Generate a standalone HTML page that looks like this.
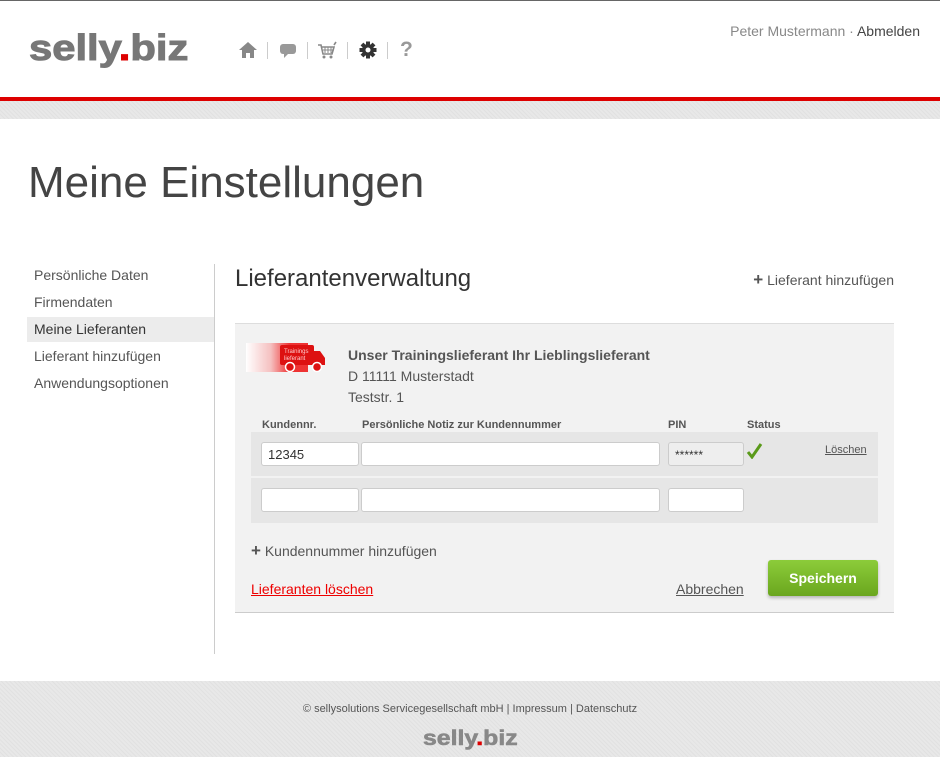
<!DOCTYPE html>
<html><head><meta charset="utf-8"><style>
*{margin:0;padding:0;box-sizing:border-box}
body{width:940px;height:757px;position:relative;background:#fff;font-family:"Liberation Sans",sans-serif;color:#555;overflow:hidden}
.a{position:absolute;white-space:nowrap}
.logo{font-weight:bold;color:#777;letter-spacing:0px}
.logo i{font-style:normal;color:#d00}
.sep{position:absolute;top:42px;width:1px;height:17px;background:#ccc}
.side{left:34px;font-size:14px;color:#555}
.inp{position:absolute;background:#fff;border:1px solid #ccc;border-radius:3px;height:24px;font-size:13px;padding:4px 6px;color:#333}
.hd{font-size:11px;font-weight:bold;color:#555;top:419px}
.tex{background:#e8e8e8;background-image:repeating-linear-gradient(45deg,rgba(0,0,0,.03) 0 1px,transparent 1px 3px)}
</style></head><body>
<div class="a" style="left:0;top:0;width:940px;height:1px;background:#666"></div>
<div class="a logo" style="left:29px;top:27px;font-size:36px;transform:scaleX(1.16);transform-origin:left;-webkit-text-stroke:1px #777">selly<i style="-webkit-text-stroke:1px #d00">.</i>biz</div>
<svg class="a" style="left:238px;top:41px" width="20" height="18" viewBox="0 0 20 18"><path d="M10 1L1 9h3v8h4v-5h4v5h4V9h3z" fill="#888"/></svg>
<div class="sep" style="left:267px"></div>
<svg class="a" style="left:279px;top:43px" width="18" height="16" viewBox="0 0 18 16"><rect x="1" y="1" width="16" height="10" rx="3" fill="#999"/><path d="M5 10l0 5 5-5z" fill="#999"/></svg>
<div class="sep" style="left:307px"></div>
<svg class="a" style="left:317px;top:41px" width="20" height="18" viewBox="0 0 20 18"><path d="M1 4h3l2 9h9l2-7H5M19 1l-2 3" stroke="#888" stroke-width="1.6" fill="none"/><path d="M8 6v6M11 6v6M14 6v6M6 9h11" stroke="#888" stroke-width="1"/><circle cx="7" cy="16" r="1.5" fill="#888"/><circle cx="14" cy="16" r="1.5" fill="#888"/></svg>
<div class="sep" style="left:347px"></div>
<svg class="a" style="left:359px;top:41px" width="18" height="18" viewBox="0 0 18 18"><g fill="#333"><circle cx="9" cy="9" r="6"/><rect x="7" y="0.5" width="4" height="17"/><rect x="0.5" y="7" width="17" height="4"/><rect x="7" y="0.5" width="4" height="17" transform="rotate(45 9 9)"/><rect x="7" y="0.5" width="4" height="17" transform="rotate(-45 9 9)"/></g><circle cx="9" cy="9" r="2.5" fill="#fff"/></svg>
<div class="sep" style="left:387px"></div>
<div class="a" style="left:400px;top:38px;font-size:21px;font-weight:bold;color:#999">?</div>
<div class="a" style="right:20px;top:23px;font-size:14px;color:#888">Peter Mustermann · <span style="color:#444">Abmelden</span></div>
<div class="a" style="left:0;top:97px;width:940px;height:4px;background:#d00"></div>
<div class="a tex" style="left:0;top:101px;width:940px;height:18px"></div>
<div class="a" style="left:28px;top:158px;font-size:44px;color:#444;font-weight:300">Meine Einstellungen</div>
<div class="a" style="left:27px;top:317px;width:187px;height:25px;background:#ececec"></div>
<div class="a side" style="top:267px">Persönliche Daten</div>
<div class="a side" style="top:294px">Firmendaten</div>
<div class="a side" style="top:321px;color:#333">Meine Lieferanten</div>
<div class="a side" style="top:348px">Lieferant hinzufügen</div>
<div class="a side" style="top:375px">Anwendungsoptionen</div>
<div class="a" style="left:214px;top:264px;width:1px;height:390px;background:#ccc"></div>
<div class="a" style="left:235px;top:265px;font-size:24px;color:#333">Lieferantenverwaltung</div>
<div class="a" style="right:46px;top:270px;font-size:14px;color:#555"><b style="font-size:17px;color:#555">+</b> Lieferant hinzufügen</div>
<div class="a" style="left:235px;top:323px;width:659px;height:290px;background:#f2f2f2;border-top:1px solid #ddd;border-bottom:1px solid #ccc"></div>
<div class="a" style="left:246px;top:343px;width:62px;height:29px;background:linear-gradient(90deg,#fff 0%,#f5c0c0 40%,#e33 70%)"></div>
<svg class="a" style="left:280px;top:343px" width="46" height="30" viewBox="0 0 46 30"><rect x="0" y="2" width="34" height="20" rx="2" fill="#d11"/><path d="M34 8h6l5 7v7h-11z" fill="#d11"/><circle cx="10" cy="24" r="4.5" fill="#d11" stroke="#fff" stroke-width="1.5"/><circle cx="37" cy="24" r="4.5" fill="#d11" stroke="#fff" stroke-width="1.5"/><text x="4" y="10" font-size="6" fill="#fcc" font-family="Liberation Sans">Trainings</text><text x="4" y="17" font-size="6" fill="#fcc" font-family="Liberation Sans">lieferant</text></svg>
<div class="a" style="left:348px;top:347px;font-size:14px;font-weight:bold;color:#555">Unser Trainingslieferant Ihr Lieblingslieferant</div>
<div class="a" style="left:348px;top:368px;font-size:14px;color:#555">D 11111 Musterstadt</div>
<div class="a" style="left:348px;top:389px;font-size:14px;color:#555">Teststr. 1</div>
<div class="a hd" style="left:262px">Kundennr.</div>
<div class="a hd" style="left:362px">Persönliche Notiz zur Kundennummer</div>
<div class="a hd" style="left:668px">PIN</div>
<div class="a hd" style="left:747px">Status</div>
<div class="a" style="left:251px;top:432px;width:627px;height:44px;background:#e6e6e6"></div>
<div class="a" style="left:251px;top:478px;width:627px;height:45px;background:#e6e6e6"></div>
<div class="inp" style="left:261px;top:442px;width:98px">12345</div>
<div class="inp" style="left:361px;top:442px;width:299px"></div>
<div class="inp" style="left:668px;top:442px;width:76px;background:#eee;font-size:12px;padding-top:5px">******</div>
<svg class="a" style="left:746px;top:443px" width="17" height="16" viewBox="0 0 17 16"><path d="M2 9l4 5L15 1" stroke="#5a9a1a" stroke-width="3" fill="none"/></svg>
<div class="a" style="left:825px;top:444px;font-size:11px;color:#555;text-decoration:underline">Löschen</div>
<div class="inp" style="left:261px;top:488px;width:98px"></div>
<div class="inp" style="left:361px;top:488px;width:299px"></div>
<div class="inp" style="left:668px;top:488px;width:76px"></div>
<div class="a" style="left:251px;top:541px;font-size:14px;color:#555"><b style="font-size:17px">+</b> Kundennummer hinzufügen</div>
<div class="a" style="left:251px;top:581px;font-size:14px;color:#e00;text-decoration:underline">Lieferanten löschen</div>
<div class="a" style="left:676px;top:581px;font-size:14px;color:#555;text-decoration:underline">Abbrechen</div>
<div class="a" style="left:768px;top:560px;width:110px;height:36px;border-radius:3px;background:linear-gradient(#8ccc3a,#6aa61e);box-shadow:0 2px 3px rgba(0,0,0,.25);color:#fff;font-weight:bold;font-size:14px;text-align:center;line-height:36px">Speichern</div>
<div class="a tex" style="left:0;top:681px;width:940px;height:76px"></div>
<div class="a" style="left:0;width:940px;text-align:center;top:703px;font-size:11px;color:#555">© sellysolutions Servicegesellschaft mbH | Impressum | Datenschutz</div>
<div class="a logo" style="left:423px;top:727px;font-size:21px;color:#888;transform:scaleX(1.18);transform-origin:left;-webkit-text-stroke:.6px #888">selly<i style="-webkit-text-stroke:.6px #d00">.</i>biz</div>
</body></html>
